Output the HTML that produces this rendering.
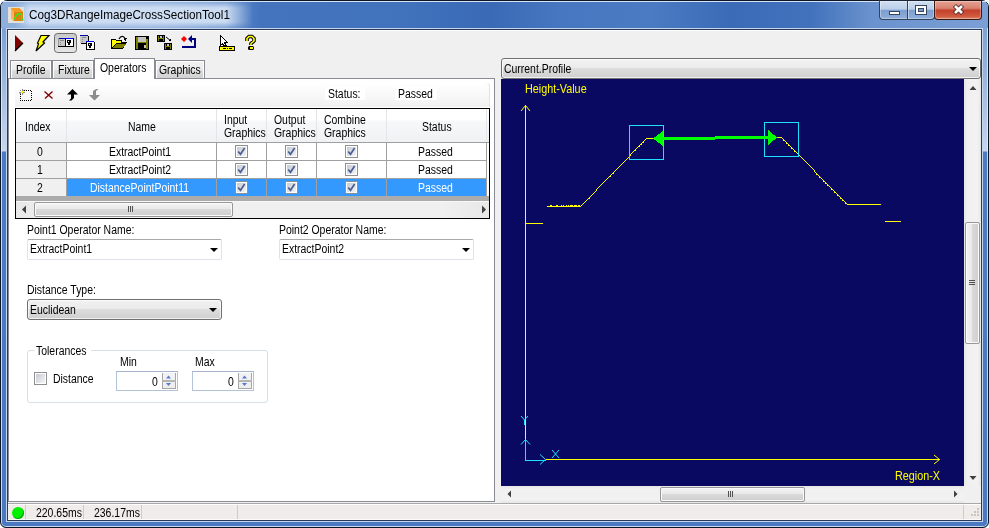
<!DOCTYPE html>
<html><head><meta charset="utf-8">
<style>
*{box-sizing:border-box;margin:0;padding:0}
html,body{width:989px;height:528px;overflow:hidden;background:#fff}
body{position:relative;font-family:"Liberation Sans",sans-serif;font-size:12px;color:#000}
.a{position:absolute}
.t{position:absolute;white-space:nowrap;line-height:13px;transform:scaleX(.87);transform-origin:0 0}
svg{position:absolute;overflow:visible}
.tab{position:absolute;border:1px solid #898c95;border-bottom:none;background:linear-gradient(180deg,#f2f2f2 0,#ebebeb 50%,#dddddd 51%,#cfcfcf 100%);box-shadow:inset 1px 1px 0 #fff,inset -1px 0 0 #fff}
.combo{position:absolute;border:1px solid #adadad;border-radius:2px;background:#fff}
.btncombo{position:absolute;border:1px solid #707070;border-radius:3px;background:linear-gradient(180deg,#f2f2f2 0,#ebebeb 45%,#dddddd 50%,#cfcfcf 100%);box-shadow:inset 0 0 0 1px rgba(255,255,255,.7)}
.arr{position:absolute;width:0;height:0;border-left:4px solid transparent;border-right:4px solid transparent;border-top:4px solid #000}
.cb{position:absolute;width:13px;height:13px;border:1px solid #8f8f8f;background:linear-gradient(135deg,#cbcfd5 0,#f6f6f6 100%);box-shadow:inset 0 0 0 1px #f4f4f4}
.sep{position:absolute;background:#a0a0a0}
</style></head><body>

<!-- window frame -->
<div class="a" style="left:0;top:0;width:989px;height:528px;border-radius:7px 7px 6px 6px;background:linear-gradient(180deg,#8fb0dc 0px,#7fa2d4 30px,#c6d7ed 150px,#4b7bc3 151px,#4a79c2 528px);border:1px solid #0d1624;box-shadow:inset 0 0 0 1px rgba(230,240,250,.8)"></div>
<!-- title bar glass -->
<div class="a" style="left:1px;top:1px;width:987px;height:27px;border-radius:6px 6px 0 0;background:linear-gradient(90deg,#8fb0dc 0px,#7ea2d6 160px,#5583c6 235px,#4574be 260px,#4172bc 400px,#3a6ab5 490px,#4777c0 560px,#4a7bc3 650px,#3b6bb6 730px,#4272bc 810px,#6a92cd 870px,#7ca0d6 989px)"></div>
<div class="a" style="left:1px;top:1px;width:987px;height:1px;background:#d6e4f5;border-radius:6px 6px 0 0"></div>
<div class="a" style="left:14px;top:2px;width:239px;height:26px;background:linear-gradient(90deg,rgba(214,228,246,0) 0,rgba(214,228,246,.88) 16px,rgba(214,228,246,.9) 212px,rgba(214,228,246,0) 239px);-webkit-mask-image:linear-gradient(180deg,rgba(0,0,0,.35) 0,#000 6px,#000 20px,rgba(0,0,0,.35) 26px)"></div>
<!-- app icon -->
<div class="a" style="left:8px;top:7px;width:16px;height:16px;background:#e4e0d8"></div>
<svg style="left:8px;top:7px" width="16" height="16" viewBox="0 0 16 16">
 <polygon points="3,1 11,1 15,5 15,14 6,14 3,11" fill="#e07f10"/>
 <polygon points="3,1 11,1 15,5 6,5" fill="#f39a22"/>
 <polygon points="3,1 6,5 6,14 3,11" fill="#fbb45c"/>
 <polyline points="6,12.5 9.5,7 13.5,7 13.5,12.5 15.5,12.5" fill="none" stroke="#22f022" stroke-width="1.3"/>
</svg>
<div class="t" style="left:29px;top:8px;font-size:13px;transform:scaleX(.9);color:#000">Cog3DRangeImageCrossSectionTool1</div>

<!-- caption buttons -->
<div class="a" style="left:879px;top:0;width:56px;height:20px;border:1px solid #2f4360;border-top-color:#1a2638;border-radius:0 0 4px 4px;background:linear-gradient(180deg,#d0def2 0,#bccfea 45%,#7d9fd0 52%,#8eaedb 100%);box-shadow:inset 0 0 0 1px rgba(255,255,255,.35)"></div>
<div class="a" style="left:907px;top:1px;width:1px;height:18px;background:#2f4360"></div>
<div class="a" style="left:908px;top:1px;width:1px;height:18px;background:rgba(255,255,255,.45)"></div>
<div class="a" style="left:934px;top:0;width:48px;height:20px;border:1px solid #3a1a14;border-top-color:#1a1010;border-radius:0 0 4px 4px;background:linear-gradient(180deg,#e6a394 0,#d98170 40%,#c4412b 52%,#cf5a3e 85%,#e08a6a 100%);box-shadow:inset 0 0 0 1px rgba(255,255,255,.3)"></div>
<div class="a" style="left:889px;top:11px;width:11px;height:4px;background:#fff;border:1px solid #34465e"></div>
<div class="a" style="left:915px;top:5px;width:12px;height:10px;background:#fff;border:1px solid #34465e"></div>
<div class="a" style="left:918px;top:8px;width:6px;height:4px;background:#7d9fd0;border:1px solid #34465e"></div>
<svg style="left:952px;top:4px" width="13" height="11" viewBox="0 0 13 11">
 <path d="M2.5,1.5 L10.5,9.5 M10.5,1.5 L2.5,9.5" stroke="#4a2a26" stroke-width="4.4" stroke-linecap="butt"/>
 <path d="M3,2 L10,9 M10,2 L3,9" stroke="#fff" stroke-width="2.6" stroke-linecap="butt"/>
</svg>
<!-- client area -->
<div class="a" style="left:6px;top:28px;width:977px;height:494px;border:1px solid #c4d6ee"></div>
<div class="a" style="left:7px;top:29px;width:975px;height:492px;border:1px solid #2a3a58;background:#f0f0f0"></div>
<div class="a" style="left:8px;top:30px;width:973px;height:1px;background:#fff"></div>

<!-- ===== main toolbar ===== -->
<svg style="left:0;top:0" width="989" height="60" viewBox="0 0 989 60" shape-rendering="crispEdges">
 <!-- play -->
 <polygon points="15,35 23,43 15,51" fill="#800000" shape-rendering="auto"/>
 <path d="M23,43 L15,51" stroke="#000" stroke-width="1.2" shape-rendering="auto"/>
 <!-- lightning -->
 <polygon points="41,35.5 49,35.5 43,42 44.5,43 36,51 38.5,44 37.5,43" fill="#ffff00" stroke="#000" stroke-width="1.2" shape-rendering="auto"/>
 <!-- pressed button -->
 <defs><linearGradient id="pbg" x1="0" y1="0" x2="0" y2="1"><stop offset="0" stop-color="#c9c9c9"/><stop offset="1" stop-color="#e6e6e6"/></linearGradient></defs><rect x="54.5" y="33.5" width="22" height="19" rx="3" ry="3" fill="url(#pbg)" stroke="#6b6b6b" shape-rendering="auto"/>
 <!-- icon 1 -->
 <rect x="58" y="38" width="1" height="8" fill="#9a9a9a"/>
 <rect x="59" y="39" width="6" height="7" fill="#c8c8c8"/>
 <rect x="59" y="38" width="6" height="1" fill="#0000b0"/>
 <rect x="65" y="38" width="1" height="9" fill="#000"/>
 <rect x="58" y="46" width="16" height="1" fill="#000"/>
 <rect x="60" y="40" width="4" height="1" fill="#8a8a8a"/>
 <rect x="60" y="42" width="1" height="1" fill="#8a8a8a"/>
 <rect x="60" y="44" width="1" height="1" fill="#8a8a8a"/>
 <rect x="66" y="39" width="7" height="7" fill="#fff"/>
 <rect x="66" y="38" width="7" height="1" fill="#0000ff"/>
 <rect x="73" y="38" width="1" height="9" fill="#000"/>
 <rect x="67" y="40" width="4" height="3" fill="#000"/>
 <rect x="68" y="41" width="1" height="1" fill="#fff"/>
 <rect x="68" y="43" width="2" height="2" fill="#000"/>
 <!-- icon 2 -->
 <rect x="80" y="36" width="8" height="7" fill="#c8c8c8"/>
 <rect x="80" y="35" width="8" height="1" fill="#0000b0"/>
 <rect x="88" y="36" width="1" height="8" fill="#000"/>
 <rect x="81" y="43" width="8" height="1" fill="#000"/>
 <rect x="82" y="37" width="4" height="1" fill="#8a8a8a"/>
 <rect x="82" y="39" width="1" height="1" fill="#8a8a8a"/>
 <rect x="82" y="41" width="1" height="1" fill="#8a8a8a"/>
 <rect x="86" y="41" width="8" height="1" fill="#0000ff"/>
 <rect x="86" y="42" width="1" height="8" fill="#000"/>
 <rect x="87" y="42" width="7" height="7" fill="#fff"/>
 <rect x="94" y="42" width="1" height="8" fill="#000"/>
 <rect x="87" y="49" width="8" height="1" fill="#000"/>
 <rect x="88" y="43" width="4" height="3" fill="#000"/>
 <rect x="89" y="44" width="1" height="1" fill="#fff"/>
 <rect x="89" y="46" width="2" height="2" fill="#000"/>
 <!-- open folder -->
 <polygon points="111,39 115,39 116,40 122,40 122,42 127,42 123,49 111,49" fill="#000"/>
 <polygon points="112,40 115,40 116,41 121,41 121,43 116,43 112,48" fill="#ffff00"/>
 <polygon points="116,44 126,44 122,48 113,48" fill="#808000"/>
 <polygon points="123,39 127,38 126,41" fill="#000"/>
 <!-- floppy -->
 <rect x="135" y="36" width="14" height="14" fill="#000"/>
 <rect x="136" y="37" width="2" height="12" fill="#808000"/>
 <rect x="146" y="39" width="2" height="10" fill="#808000"/>
 <rect x="136" y="42" width="12" height="1" fill="#808000"/>
 <rect x="138" y="37" width="8" height="5" fill="#c4c4c4"/>
 <rect x="144" y="45" width="2" height="3" fill="#c4c4c4"/>
 <!-- multi floppy -->
 <rect x="157" y="35" width="8" height="7" fill="#000"/>
 <rect x="158" y="36" width="1" height="5" fill="#808000"/>
 <rect x="163" y="36" width="1" height="5" fill="#808000"/>
 <rect x="158" y="38" width="6" height="1" fill="#808000"/>
 <rect x="160" y="36" width="2" height="2" fill="#c4c4c4"/>
 <rect x="164" y="43" width="8" height="7" fill="#000"/>
 <rect x="165" y="44" width="1" height="5" fill="#808000"/>
 <rect x="170" y="44" width="1" height="5" fill="#808000"/>
 <rect x="165" y="46" width="6" height="1" fill="#808000"/>
 <rect x="167" y="44" width="2" height="2" fill="#c4c4c4"/>
 <path d="M166,37 L171,41" stroke="#000" stroke-width="1" shape-rendering="auto"/>
 <polygon points="168,41 171,41 171,38" fill="#000"/>
 <!-- red dot + blue return arrow -->
 <polygon points="184,36 187,39 184,42 181,39" fill="#ff0000" shape-rendering="auto"/>
 <polygon points="188,39 192,35 192,43" fill="#000080" shape-rendering="auto"/>
 <rect x="191" y="38" width="5" height="2" fill="#000080"/>
 <rect x="194" y="38" width="2" height="10" fill="#000080"/>
 <rect x="182" y="46" width="14" height="2" fill="#000080"/>
 <!-- pointer + ruler -->
 <polygon points="220.5,35.5 227.5,42.5 224.5,42.5 226,45.5 223.5,45.5 222.5,43.5 220.5,45.5" fill="#fff" stroke="#000" stroke-width="1"/>
 <rect x="219" y="46" width="16" height="5" fill="#000"/>
 <rect x="220" y="47" width="14" height="3" fill="#ffff00"/>
 <rect x="223" y="48" width="3" height="1" fill="#000"/>
 <rect x="227" y="48" width="1" height="1" fill="#000"/>
 <rect x="229" y="48" width="3" height="1" fill="#000"/>
 <!-- help -->
 <path d="M247,41 L247,38.5 L249,36.5 L252,36.5 L254,38.5 L254,41 L251,43.5 L251,45" fill="none" stroke="#000" stroke-width="3.6" shape-rendering="auto"/>
 <path d="M247,41 L247,38.5 L249,36.5 L252,36.5 L254,38.5 L254,41 L251,43.5 L251,45" fill="none" stroke="#ffff00" stroke-width="1.6" shape-rendering="auto"/>
 <rect x="248" y="46" width="6" height="4" rx="1.5" fill="#000" shape-rendering="auto"/>
 <rect x="249.5" y="47" width="3" height="2" fill="#ffff00"/>
 <path d="M119,39 Q120.5,36 123,36.5 Q124.5,37 125,39" fill="none" stroke="#000" stroke-width="1.2" shape-rendering="auto"/>
</svg>

<!-- ===== tabs ===== -->
<div class="tab" style="left:10px;top:60px;width:42px;height:19px"></div>
<div class="t" style="left:16px;top:64px">Profile</div>
<div class="tab" style="left:52px;top:60px;width:42px;height:19px"></div>
<div class="t" style="left:58px;top:64px">Fixture</div>
<div class="tab" style="left:155px;top:60px;width:50px;height:19px"></div>
<div class="t" style="left:159px;top:64px">Graphics</div>
<!-- tab page -->
<div class="a" style="left:8px;top:78px;width:487px;height:424px;border:1px solid #898c95;background:#fff"></div>
<div class="a" style="left:94px;top:58px;width:61px;height:21px;border:1px solid #898c95;border-bottom:none;background:#fff"></div>
<div class="t" style="left:100px;top:62px">Operators</div>

<!-- inner toolstrip -->
<div class="a" style="left:15px;top:83px;width:475px;height:24px;border-radius:3px 3px 0 0;background:linear-gradient(180deg,#ffffff 0,#f7f7f7 60%,#f0f0f0 100%);box-shadow:inset -1px 0 0 #e2e2e2"></div>
<svg style="left:0;top:0" width="500" height="110" viewBox="0 0 500 110" shape-rendering="crispEdges">
 <!-- new -->
 <g fill="#000">
  <rect x="22" y="90" width="1" height="1"/><rect x="24" y="90" width="1" height="1"/><rect x="26" y="90" width="1" height="1"/><rect x="28" y="90" width="1" height="1"/><rect x="30" y="90" width="1" height="1"/>
  <rect x="31" y="91" width="1" height="1"/><rect x="31" y="93" width="1" height="1"/><rect x="31" y="95" width="1" height="1"/><rect x="31" y="97" width="1" height="1"/><rect x="31" y="99" width="1" height="1"/>
  <rect x="20" y="100" width="1" height="1"/><rect x="22" y="100" width="1" height="1"/><rect x="24" y="100" width="1" height="1"/><rect x="26" y="100" width="1" height="1"/><rect x="28" y="100" width="1" height="1"/><rect x="30" y="100" width="1" height="1"/>
  <rect x="20" y="94" width="1" height="1"/><rect x="20" y="96" width="1" height="1"/><rect x="20" y="98" width="1" height="1"/>
 </g>
 <path d="M19,92 L25,92 M22,89 L22,95 M20,90 L24,94 M24,90 L20,94" stroke="#8a8a8a" stroke-width="1"/>
 <rect x="21" y="91" width="2" height="2" fill="#ffff00"/><rect x="25" y="89" width="1" height="2" fill="#ffff00"/><rect x="19" y="93" width="1" height="1" fill="#ffff00"/><rect x="23" y="93" width="1" height="1" fill="#ffff00"/>
 <!-- delete -->
 <path d="M44.5,91.5 L52.5,98.5 M52.5,91.5 L45,98.5" stroke="#800000" stroke-width="1.35" shape-rendering="auto"/>
 <!-- up -->
 <polygon points="72.5,89 78,94.5 74,94.5 74,98 71.5,100.5 69,100.5 71,98.5 71,94.5 67,94.5" fill="#000" shape-rendering="auto"/>
 <!-- down (disabled) -->
 <polygon points="94.5,100.5 100,95 96,95 96,91 98.5,89 96,89 93,91 93,95 89,95" fill="#8c8c8c" shape-rendering="auto"/>
</svg>
<!-- status labels -->
<div class="a" style="left:325px;top:87px;width:40px;height:13px;background:#fff"></div>
<div class="t" style="left:328px;top:88px">Status:</div>
<div class="a" style="left:395px;top:87px;width:42px;height:13px;background:#fff"></div>
<div class="t" style="left:398px;top:88px">Passed</div>

<!-- ===== grid ===== -->
<div class="a" style="left:15px;top:108px;width:475px;height:111px;border:1px solid #000;background:#ababab"></div>
<!-- header -->
<div class="a" style="left:16px;top:109px;width:473px;height:33px;background:linear-gradient(180deg,#ffffff 0,#ffffff 11px,#f7f8fa 12px,#f0f1f3 100%)"></div>
<div class="a" style="left:16px;top:142px;width:473px;height:1px;background:#a0a0a0"></div>
<div class="a" style="left:66px;top:109px;width:1px;height:33px;background:#e4e5e8"></div>
<div class="a" style="left:216px;top:109px;width:1px;height:33px;background:#e4e5e8"></div>
<div class="a" style="left:266px;top:109px;width:1px;height:33px;background:#e4e5e8"></div>
<div class="a" style="left:316px;top:109px;width:1px;height:33px;background:#e4e5e8"></div>
<div class="a" style="left:386px;top:109px;width:1px;height:33px;background:#e4e5e8"></div>
<div class="a" style="left:486px;top:109px;width:1px;height:33px;background:#e4e5e8"></div>
<div class="t" style="left:25px;top:121px">Index</div>
<div class="t" style="left:128px;top:121px">Name</div>
<div class="t" style="left:224px;top:114px">Input<br>Graphics</div>
<div class="t" style="left:274px;top:114px">Output<br>Graphics</div>
<div class="t" style="left:324px;top:114px">Combine<br>Graphics</div>
<div class="t" style="left:422px;top:121px">Status</div>
<!-- rows -->
<div class="a" style="left:16px;top:143px;width:473px;height:53px;background:#fff"></div>
<div class="a" style="left:16px;top:143px;width:50px;height:53px;background:#f0f0f0"></div>
<div class="a" style="left:67px;top:179px;width:419px;height:17px;background:#3399ff"></div>
<div class="a" style="left:16px;top:160px;width:471px;height:1px;background:#a0a0a0"></div>
<div class="a" style="left:16px;top:178px;width:471px;height:1px;background:#a0a0a0"></div>
<div class="a" style="left:16px;top:196px;width:473px;height:5px;background:#ababab"></div>
<div class="sep" style="left:66px;top:143px;width:1px;height:53px"></div>
<div class="sep" style="left:216px;top:143px;width:1px;height:53px"></div>
<div class="sep" style="left:266px;top:143px;width:1px;height:53px"></div>
<div class="sep" style="left:316px;top:143px;width:1px;height:53px"></div>
<div class="sep" style="left:386px;top:143px;width:1px;height:53px"></div>
<div class="sep" style="left:486px;top:143px;width:1px;height:53px"></div>
<div class="t" style="left:37px;top:146px">0</div>
<div class="t" style="left:37px;top:164px">1</div>
<div class="t" style="left:37px;top:182px">2</div>
<div class="t" style="left:109px;top:146px">ExtractPoint1</div>
<div class="t" style="left:109px;top:164px">ExtractPoint2</div>
<div class="t" style="left:90px;top:182px;color:#fff">DistancePointPoint11</div>
<div class="t" style="left:418px;top:146px">Passed</div>
<div class="t" style="left:418px;top:164px">Passed</div>
<div class="t" style="left:418px;top:182px;color:#fff">Passed</div>
<!-- checkboxes -->
<svg style="left:0;top:0" width="500" height="200" viewBox="0 0 500 200">
 <defs>
  <linearGradient id="cbg" x1="0" y1="0" x2="1" y2="1"><stop offset="0" stop-color="#c6cbd3"/><stop offset="1" stop-color="#f4f4f4"/></linearGradient>
 </defs>
 <g transform="translate(235,145)"><rect x="0.5" y="0.5" width="12" height="12" fill="#fff" stroke="#8f8f8f"/><rect x="2" y="2" width="9" height="9" fill="url(#cbg)"/><path d="M3.2,6.5 L5.5,9.3 L9.6,3" fill="none" stroke="#4a5f97" stroke-width="1.7"/></g><g transform="translate(285,145)"><rect x="0.5" y="0.5" width="12" height="12" fill="#fff" stroke="#8f8f8f"/><rect x="2" y="2" width="9" height="9" fill="url(#cbg)"/><path d="M3.2,6.5 L5.5,9.3 L9.6,3" fill="none" stroke="#4a5f97" stroke-width="1.7"/></g><g transform="translate(345,145)"><rect x="0.5" y="0.5" width="12" height="12" fill="#fff" stroke="#8f8f8f"/><rect x="2" y="2" width="9" height="9" fill="url(#cbg)"/><path d="M3.2,6.5 L5.5,9.3 L9.6,3" fill="none" stroke="#4a5f97" stroke-width="1.7"/></g>
 <g transform="translate(235,163)"><rect x="0.5" y="0.5" width="12" height="12" fill="#fff" stroke="#8f8f8f"/><rect x="2" y="2" width="9" height="9" fill="url(#cbg)"/><path d="M3.2,6.5 L5.5,9.3 L9.6,3" fill="none" stroke="#4a5f97" stroke-width="1.7"/></g><g transform="translate(285,163)"><rect x="0.5" y="0.5" width="12" height="12" fill="#fff" stroke="#8f8f8f"/><rect x="2" y="2" width="9" height="9" fill="url(#cbg)"/><path d="M3.2,6.5 L5.5,9.3 L9.6,3" fill="none" stroke="#4a5f97" stroke-width="1.7"/></g><g transform="translate(345,163)"><rect x="0.5" y="0.5" width="12" height="12" fill="#fff" stroke="#8f8f8f"/><rect x="2" y="2" width="9" height="9" fill="url(#cbg)"/><path d="M3.2,6.5 L5.5,9.3 L9.6,3" fill="none" stroke="#4a5f97" stroke-width="1.7"/></g>
 <g transform="translate(235,181)"><rect x="0.5" y="0.5" width="12" height="12" fill="#fff" stroke="#8f8f8f"/><rect x="2" y="2" width="9" height="9" fill="url(#cbg)"/><path d="M3.2,6.5 L5.5,9.3 L9.6,3" fill="none" stroke="#4a5f97" stroke-width="1.7"/></g><g transform="translate(285,181)"><rect x="0.5" y="0.5" width="12" height="12" fill="#fff" stroke="#8f8f8f"/><rect x="2" y="2" width="9" height="9" fill="url(#cbg)"/><path d="M3.2,6.5 L5.5,9.3 L9.6,3" fill="none" stroke="#4a5f97" stroke-width="1.7"/></g><g transform="translate(345,181)"><rect x="0.5" y="0.5" width="12" height="12" fill="#fff" stroke="#8f8f8f"/><rect x="2" y="2" width="9" height="9" fill="url(#cbg)"/><path d="M3.2,6.5 L5.5,9.3 L9.6,3" fill="none" stroke="#4a5f97" stroke-width="1.7"/></g>
</svg>
<!-- h scrollbar -->
<div class="a" style="left:16px;top:201px;width:473px;height:17px;background:linear-gradient(90deg,#e8e8e8,#f0f0f0 10%,#f0f0f0 90%,#e8e8e8);box-shadow:inset 0 1px 0 #f8f8f8"></div>
<div class="a" style="left:34px;top:202px;width:199px;height:15px;border:1px solid #979797;border-radius:2px;background:linear-gradient(180deg,#f3f3f3 0,#e9e9e9 45%,#d9d9d9 50%,#cecece 100%);box-shadow:inset 0 0 0 1px #fafafa"></div>
<svg style="left:0;top:0" width="500" height="220" viewBox="0 0 500 220" shape-rendering="crispEdges">
 <polygon points="22,209.5 26,205.5 26,213.5" fill="#404040" shape-rendering="auto"/>
 <polygon points="482,205.5 486,209.5 482,213.5" fill="#404040" shape-rendering="auto"/>
 <rect x="128" y="206" width="1" height="6" fill="#505050"/>
 <rect x="130" y="206" width="1" height="6" fill="#505050"/>
 <rect x="132" y="206" width="1" height="6" fill="#505050"/>
 <rect x="129" y="206" width="1" height="6" fill="#e0e0e0"/>
 <rect x="131" y="206" width="1" height="6" fill="#e0e0e0"/>
 <rect x="133" y="206" width="1" height="6" fill="#e0e0e0"/>
</svg>

<!-- ===== form ===== -->
<div class="t" style="left:27px;top:224px">Point1 Operator Name:</div>
<div class="combo" style="left:27px;top:239px;width:195px;height:21px;border-color:#a9a9a9 #dfe2e8 #dfe2e8 #dfe2e8"></div>
<div class="t" style="left:30px;top:243px">ExtractPoint1</div>
<div class="arr" style="left:210px;top:248px"></div>
<div class="t" style="left:279px;top:224px">Point2 Operator Name:</div>
<div class="combo" style="left:279px;top:239px;width:195px;height:21px;border-color:#a9a9a9 #dfe2e8 #dfe2e8 #dfe2e8"></div>
<div class="t" style="left:282px;top:243px">ExtractPoint2</div>
<div class="arr" style="left:462px;top:248px"></div>

<div class="t" style="left:27px;top:284px">Distance Type:</div>
<div class="btncombo" style="left:27px;top:299px;width:195px;height:21px"></div>
<div class="t" style="left:30px;top:304px">Euclidean</div>
<div class="arr" style="left:209px;top:308px"></div>

<!-- tolerances group -->
<div class="a" style="left:27px;top:350px;width:241px;height:53px;border:1px solid #d5dfe5;border-radius:3px"></div>
<div class="a" style="left:34px;top:345px;width:57px;height:10px;background:#fff"></div>
<div class="t" style="left:36px;top:345px">Tolerances</div>
<div class="t" style="left:120px;top:356px">Min</div>
<div class="t" style="left:195px;top:356px">Max</div>
<svg style="left:0;top:0" width="300" height="400" viewBox="0 0 300 400">
 <defs><linearGradient id="cbg2" x1="0" y1="0" x2="1" y2="1"><stop offset="0" stop-color="#c6cbd3"/><stop offset="1" stop-color="#f4f4f4"/></linearGradient></defs>
 <rect x="34.5" y="372.5" width="12" height="12" fill="#fff" stroke="#8f8f8f"/>
 <rect x="36" y="374" width="9" height="9" fill="url(#cbg2)"/>
</svg>
<div class="t" style="left:53px;top:373px">Distance</div>
<!-- numeric up-downs -->
<div class="a" style="left:116px;top:371px;width:62px;height:20px;border:1px solid #b5c3d8;background:#fff;border-top-color:#a3b3cc"></div>
<div class="t" style="left:152px;top:376px">0</div>
<div class="a" style="left:192px;top:371px;width:62px;height:20px;border:1px solid #b5c3d8;background:#fff;border-top-color:#a3b3cc"></div>
<div class="t" style="left:228px;top:376px">0</div>
<svg style="left:0;top:0" width="300" height="400" viewBox="0 0 300 400">
 <defs><linearGradient id="spg" x1="0" y1="0" x2="0" y2="1"><stop offset="0" stop-color="#f2f2f2"/><stop offset="1" stop-color="#dcdcdc"/></linearGradient></defs>
 <g transform="translate(162,373)"><rect x="1" y="0" width="12" height="7" fill="#f2f2f2"/><rect x="1" y="9" width="12" height="6" fill="#eeeeee"/><rect x="0" y="0" width="1" height="16" fill="#a6a6a6"/><rect x="13" y="0" width="1" height="16" fill="#a6a6a6"/><rect x="0" y="15" width="14" height="1" fill="#a6a6a6"/><rect x="0" y="7" width="14" height="2" fill="#b4b4b4"/><polygon points="4,5.5 6.5,2.5 9,5.5" fill="#5a78c8"/><polygon points="4,10 9,10 6.5,13" fill="#5a78c8"/></g>
 <g transform="translate(238,373)"><rect x="1" y="0" width="12" height="7" fill="#f2f2f2"/><rect x="1" y="9" width="12" height="6" fill="#eeeeee"/><rect x="0" y="0" width="1" height="16" fill="#a6a6a6"/><rect x="13" y="0" width="1" height="16" fill="#a6a6a6"/><rect x="0" y="15" width="14" height="1" fill="#a6a6a6"/><rect x="0" y="7" width="14" height="2" fill="#b4b4b4"/><polygon points="4,5.5 6.5,2.5 9,5.5" fill="#5a78c8"/><polygon points="4,10 9,10 6.5,13" fill="#5a78c8"/></g>
</svg>

<!-- splitter region between panels already #f0f0f0 -->

<!-- ===== right panel ===== -->
<div class="btncombo" style="left:501px;top:58px;width:480px;height:21px"></div>
<div class="t" style="left:504px;top:63px">Current.Profile</div>
<div class="arr" style="left:969px;top:67px"></div>
<div class="a" style="left:501px;top:79px;width:463px;height:407px;background:#0a0962"></div>
<!-- v scrollbar -->
<div class="a" style="left:964px;top:79px;width:17px;height:407px;background:linear-gradient(90deg,#e6e6e6,#f0f0f0 20%,#f2f2f2 80%,#e6e6e6)"></div>
<div class="a" style="left:965px;top:222px;width:15px;height:122px;border:1px solid #979797;border-radius:2px;background:linear-gradient(90deg,#f3f3f3 0,#e9e9e9 45%,#d9d9d9 50%,#cecece 100%);box-shadow:inset 0 0 0 1px #fafafa"></div>
<!-- h scrollbar -->
<div class="a" style="left:501px;top:486px;width:463px;height:17px;background:linear-gradient(180deg,#e6e6e6,#f0f0f0 20%,#f2f2f2 80%,#e6e6e6)"></div>
<div class="a" style="left:660px;top:487px;width:145px;height:15px;border:1px solid #979797;border-radius:2px;background:linear-gradient(180deg,#f3f3f3 0,#e9e9e9 45%,#d9d9d9 50%,#cecece 100%);box-shadow:inset 0 0 0 1px #fafafa"></div>
<div class="a" style="left:964px;top:486px;width:17px;height:17px;background:#f0f0f0"></div>
<svg style="left:0;top:0" width="989" height="528" viewBox="0 0 989 528" shape-rendering="crispEdges">
 <polygon points="969.5,90 973,86 976.5,90" fill="#404040" shape-rendering="auto"/>
 <polygon points="969.5,476 976.5,476 973,480" fill="#404040" shape-rendering="auto"/>
 <polygon points="507.5,494 511,490.5 511,497.5" fill="#404040" shape-rendering="auto"/>
 <polygon points="954,490.5 957.5,494 954,497.5" fill="#404040" shape-rendering="auto"/>
 <rect x="969" y="280" width="6" height="1" fill="#505050"/>
 <rect x="969" y="282" width="6" height="1" fill="#505050"/>
 <rect x="969" y="284" width="6" height="1" fill="#505050"/>
 <rect x="728" y="491" width="1" height="6" fill="#505050"/>
 <rect x="730" y="491" width="1" height="6" fill="#505050"/>
 <rect x="732" y="491" width="1" height="6" fill="#505050"/>
</svg>

<!-- ===== plot ===== -->
<svg style="left:0;top:0" width="989" height="528" viewBox="0 0 989 528" shape-rendering="crispEdges">
 <g stroke="#ffff00" fill="none" stroke-width="1">
  <path d="M525.5,105 L525.5,460"/>
  <path d="M521,111 L525.5,105.5 L530,111" shape-rendering="auto"/>
  <path d="M546,459.5 L940,459.5"/>
  <path d="M934,455 L939.5,459.5 L934,464" shape-rendering="auto"/>
 </g>
 <g fill="#ffff00">
 <rect x="547" y="206" width="34" height="1"/>
 <rect x="550" y="205" width="1" height="1"/>
 <rect x="551" y="205" width="1" height="1"/>
 <rect x="556" y="205" width="1" height="1"/>
 <rect x="557" y="205" width="1" height="1"/>
 <rect x="561" y="205" width="1" height="1"/>
 <rect x="563" y="205" width="1" height="1"/>
 <rect x="566" y="205" width="1" height="1"/>
 <rect x="568" y="205" width="1" height="1"/>
 <rect x="570" y="205" width="1" height="1"/>
 <rect x="571" y="205" width="1" height="1"/>
 <rect x="572" y="205" width="1" height="1"/>
 <rect x="574" y="205" width="1" height="1"/>
 <rect x="575" y="205" width="1" height="1"/>
 <rect x="576" y="205" width="1" height="1"/>
 <rect x="578" y="205" width="1" height="1"/>
 <rect x="579" y="205" width="1" height="1"/>
 <rect x="580" y="206" width="1" height="1"/>
 <rect x="581" y="205" width="1" height="1"/>
 <rect x="582" y="204" width="1" height="1"/>
 <rect x="583" y="203" width="1" height="1"/>
 <rect x="584" y="202" width="1" height="1"/>
 <rect x="585" y="201" width="1" height="1"/>
 <rect x="586" y="200" width="1" height="1"/>
 <rect x="587" y="199" width="1" height="1"/>
 <rect x="588" y="198" width="1" height="1"/>
 <rect x="589" y="197" width="1" height="1"/>
 <rect x="590" y="196" width="1" height="1"/>
 <rect x="591" y="195" width="1" height="1"/>
 <rect x="592" y="194" width="1" height="1"/>
 <rect x="593" y="193" width="1" height="1"/>
 <rect x="594" y="192" width="1" height="1"/>
 <rect x="595" y="191" width="1" height="1"/>
 <rect x="596" y="190" width="1" height="1"/>
 <rect x="596" y="189" width="1" height="1"/>
 <rect x="597" y="188" width="1" height="1"/>
 <rect x="598" y="187" width="1" height="1"/>
 <rect x="599" y="186" width="1" height="1"/>
 <rect x="600" y="185" width="1" height="1"/>
 <rect x="601" y="184" width="1" height="1"/>
 <rect x="602" y="183" width="1" height="1"/>
 <rect x="603" y="182" width="1" height="1"/>
 <rect x="604" y="181" width="1" height="1"/>
 <rect x="605" y="180" width="1" height="1"/>
 <rect x="606" y="179" width="1" height="1"/>
 <rect x="607" y="178" width="1" height="1"/>
 <rect x="608" y="177" width="1" height="1"/>
 <rect x="609" y="176" width="1" height="1"/>
 <rect x="610" y="175" width="1" height="1"/>
 <rect x="611" y="174" width="1" height="1"/>
 <rect x="612" y="173" width="1" height="1"/>
 <rect x="613" y="172" width="1" height="1"/>
 <rect x="614" y="171" width="1" height="1"/>
 <rect x="615" y="170" width="1" height="1"/>
 <rect x="616" y="169" width="1" height="1"/>
 <rect x="617" y="168" width="1" height="1"/>
 <rect x="618" y="167" width="1" height="1"/>
 <rect x="619" y="166" width="1" height="1"/>
 <rect x="620" y="165" width="1" height="1"/>
 <rect x="621" y="164" width="1" height="1"/>
 <rect x="622" y="163" width="1" height="1"/>
 <rect x="623" y="162" width="1" height="1"/>
 <rect x="624" y="161" width="1" height="1"/>
 <rect x="625" y="160" width="1" height="1"/>
 <rect x="626" y="159" width="1" height="1"/>
 <rect x="627" y="158" width="1" height="1"/>
 <rect x="628" y="157" width="1" height="1"/>
 <rect x="629" y="156" width="1" height="1"/>
 <rect x="630" y="155" width="1" height="1"/>
 <rect x="630" y="154" width="1" height="1"/>
 <rect x="631" y="153" width="1" height="1"/>
 <rect x="632" y="152" width="1" height="1"/>
 <rect x="633" y="151" width="1" height="1"/>
 <rect x="634" y="150" width="1" height="1"/>
 <rect x="635" y="149" width="1" height="1"/>
 <rect x="636" y="148" width="1" height="1"/>
 <rect x="637" y="147" width="1" height="1"/>
 <rect x="638" y="146" width="1" height="1"/>
 <rect x="639" y="145" width="1" height="1"/>
 <rect x="640" y="144" width="1" height="1"/>
 <rect x="641" y="143" width="1" height="1"/>
 <rect x="642" y="142" width="1" height="1"/>
 <rect x="643" y="141" width="1" height="1"/>
 <rect x="644" y="140" width="1" height="1"/>
 <rect x="645" y="139" width="1" height="1"/>
 <rect x="646" y="138" width="1" height="1"/>
 <rect x="589" y="198" width="1" height="1"/>
 <rect x="610" y="176" width="1" height="1"/>
 <rect x="613" y="173" width="1" height="1"/>
 <rect x="635" y="150" width="1" height="1"/>
 <rect x="639" y="146" width="1" height="1"/>
 <rect x="641" y="144" width="1" height="1"/>
 <rect x="643" y="142" width="1" height="1"/>
 <rect x="646" y="138" width="8" height="1"/>
 <rect x="776" y="137" width="6" height="1"/>
 <rect x="781" y="137" width="1" height="1"/>
 <rect x="782" y="138" width="1" height="1"/>
 <rect x="783" y="139" width="1" height="1"/>
 <rect x="784" y="140" width="1" height="1"/>
 <rect x="785" y="141" width="1" height="1"/>
 <rect x="786" y="142" width="1" height="1"/>
 <rect x="787" y="143" width="1" height="1"/>
 <rect x="788" y="144" width="1" height="1"/>
 <rect x="789" y="145" width="1" height="1"/>
 <rect x="790" y="146" width="1" height="1"/>
 <rect x="791" y="147" width="1" height="1"/>
 <rect x="792" y="148" width="1" height="1"/>
 <rect x="793" y="149" width="1" height="1"/>
 <rect x="794" y="150" width="1" height="1"/>
 <rect x="795" y="151" width="1" height="1"/>
 <rect x="796" y="152" width="1" height="1"/>
 <rect x="797" y="153" width="1" height="1"/>
 <rect x="798" y="154" width="1" height="1"/>
 <rect x="799" y="155" width="1" height="1"/>
 <rect x="800" y="156" width="1" height="1"/>
 <rect x="801" y="157" width="1" height="1"/>
 <rect x="802" y="158" width="1" height="1"/>
 <rect x="803" y="159" width="1" height="1"/>
 <rect x="804" y="160" width="1" height="1"/>
 <rect x="805" y="161" width="1" height="1"/>
 <rect x="806" y="162" width="1" height="1"/>
 <rect x="807" y="163" width="1" height="1"/>
 <rect x="808" y="164" width="1" height="1"/>
 <rect x="809" y="165" width="1" height="1"/>
 <rect x="810" y="166" width="1" height="1"/>
 <rect x="811" y="167" width="1" height="1"/>
 <rect x="812" y="168" width="1" height="1"/>
 <rect x="813" y="169" width="1" height="1"/>
 <rect x="814" y="170" width="1" height="1"/>
 <rect x="814" y="171" width="1" height="1"/>
 <rect x="815" y="172" width="1" height="1"/>
 <rect x="816" y="173" width="1" height="1"/>
 <rect x="817" y="174" width="1" height="1"/>
 <rect x="818" y="175" width="1" height="1"/>
 <rect x="819" y="176" width="1" height="1"/>
 <rect x="820" y="177" width="1" height="1"/>
 <rect x="821" y="178" width="1" height="1"/>
 <rect x="822" y="179" width="1" height="1"/>
 <rect x="823" y="180" width="1" height="1"/>
 <rect x="824" y="181" width="1" height="1"/>
 <rect x="825" y="182" width="1" height="1"/>
 <rect x="826" y="183" width="1" height="1"/>
 <rect x="827" y="184" width="1" height="1"/>
 <rect x="828" y="185" width="1" height="1"/>
 <rect x="829" y="186" width="1" height="1"/>
 <rect x="830" y="187" width="1" height="1"/>
 <rect x="831" y="188" width="1" height="1"/>
 <rect x="832" y="189" width="1" height="1"/>
 <rect x="833" y="190" width="1" height="1"/>
 <rect x="834" y="191" width="1" height="1"/>
 <rect x="835" y="192" width="1" height="1"/>
 <rect x="836" y="193" width="1" height="1"/>
 <rect x="837" y="194" width="1" height="1"/>
 <rect x="838" y="195" width="1" height="1"/>
 <rect x="839" y="196" width="1" height="1"/>
 <rect x="840" y="197" width="1" height="1"/>
 <rect x="841" y="198" width="1" height="1"/>
 <rect x="842" y="199" width="1" height="1"/>
 <rect x="843" y="200" width="1" height="1"/>
 <rect x="844" y="201" width="1" height="1"/>
 <rect x="845" y="202" width="1" height="1"/>
 <rect x="846" y="203" width="1" height="1"/>
 <rect x="847" y="204" width="1" height="1"/>
 <rect x="783" y="140" width="1" height="1"/>
 <rect x="786" y="143" width="1" height="1"/>
 <rect x="788" y="145" width="1" height="1"/>
 <rect x="791" y="148" width="1" height="1"/>
 <rect x="794" y="151" width="1" height="1"/>
 <rect x="816" y="174" width="1" height="1"/>
 <rect x="819" y="177" width="1" height="1"/>
 <rect x="823" y="181" width="1" height="1"/>
 <rect x="825" y="183" width="1" height="1"/>
 <rect x="827" y="185" width="1" height="1"/>
 <rect x="831" y="189" width="1" height="1"/>
 <rect x="834" y="192" width="1" height="1"/>
 <rect x="837" y="195" width="1" height="1"/>
 <rect x="840" y="198" width="1" height="1"/>
 <rect x="842" y="200" width="1" height="1"/>
 <rect x="845" y="203" width="1" height="1"/>
 <rect x="847" y="204" width="34" height="1"/>
 <rect x="525" y="223" width="18" height="1"/>
 <rect x="885" y="221" width="16" height="1"/>
 </g>
 <g stroke="#1ee0ff" fill="none" stroke-width="1">
  <rect x="629.5" y="125.5" width="34" height="34"/>
  <rect x="764.5" y="122.5" width="34" height="34"/>
  <path d="M525.5,440 L525.5,460 L546,460"/>
  <path d="M521,444.5 L525.5,439.5 L530,444.5" shape-rendering="auto"/>
  <path d="M540,454.5 L545.5,459.5 L540,464.5" shape-rendering="auto"/>
  <path d="M552,450 L559,458 M559,450 L552,458" shape-rendering="auto"/>
  <path d="M521,416 L524.5,420 L528,416 M524.5,420 L524.5,425" shape-rendering="auto"/>
 </g>
 <g fill="#00ff00">
  <polygon points="653,138.5 663,131 663,146"/>
  <polygon points="777,137.5 768,130 768,145"/>
  <rect x="663" y="137" width="52" height="3"/>
  <rect x="715" y="136" width="53" height="3"/>
 </g>
</svg>
<div class="t" style="left:525px;top:83px;color:#ffff00;transform:scaleX(.9)">Height-Value</div>
<div class="t" style="left:895px;top:470px;color:#ffff00;transform:scaleX(.9)">Region-X</div>

<!-- ===== status bar ===== -->
<div class="a" style="left:8px;top:503px;width:973px;height:17px;background:#efecea;border-top:1px solid #a8a8a8;box-shadow:inset 0 1px 0 #fff,inset 0 -1px 0 #fbfbfb"></div>
<div class="a" style="left:25px;top:505px;width:1px;height:14px;background:#cfcbc6"></div>
<div class="a" style="left:83px;top:505px;width:1px;height:14px;background:#cfcbc6"></div>
<div class="a" style="left:141px;top:505px;width:1px;height:14px;background:#cfcbc6"></div>
<div class="a" style="left:237px;top:505px;width:1px;height:14px;background:#cfcbc6"></div>
<div class="a" style="left:963px;top:505px;width:1px;height:14px;background:#cfcbc6"></div>
<div class="a" style="left:12px;top:507px;width:12px;height:12px;border-radius:50%;background:#00f000;box-shadow:inset -1px -1px 0 #00a800"></div>
<div class="t" style="left:36px;top:507px">220.65ms</div>
<div class="t" style="left:94px;top:507px">236.17ms</div>
<svg style="left:0;top:0" width="989" height="528" viewBox="0 0 989 528" shape-rendering="crispEdges">
 <g fill="#c8c4be">
  <rect x="977" y="508" width="2" height="2"/>
  <rect x="974" y="511" width="2" height="2"/><rect x="977" y="511" width="2" height="2"/>
  <rect x="971" y="514" width="2" height="2"/><rect x="974" y="514" width="2" height="2"/><rect x="977" y="514" width="2" height="2"/>
 </g>
</svg>

</body></html>
